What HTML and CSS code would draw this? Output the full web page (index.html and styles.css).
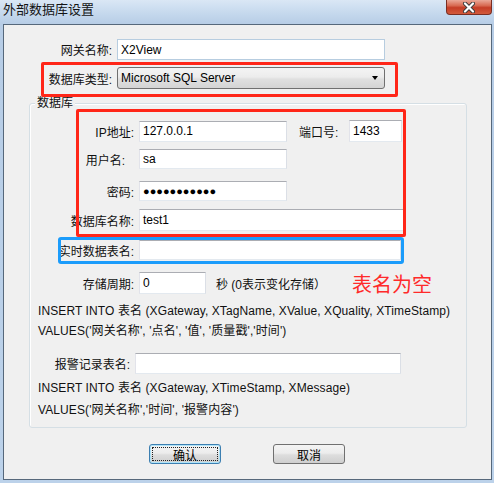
FILE: index.html
```html
<!DOCTYPE html>
<html lang="zh">
<head>
<meta charset="utf-8">
<title>外部数据库设置</title>
<link rel="stylesheet" href="styles.css">
</head>
<body>
<div class="window">
  <div class="titlebar">
    <span class="title">外部数据库设置</span>
    <div class="close">
      <svg width="14" height="11" viewBox="0 0 14 11"><path d="M3 1.5 L11 9.5 M11 1.5 L3 9.5" stroke="#3b3b3b" stroke-width="4" stroke-linecap="round"/><path d="M3 1.5 L11 9.5 M11 1.5 L3 9.5" stroke="#ffffff" stroke-width="2.2" stroke-linecap="round"/></svg>
    </div>
  </div>
  <div class="client">
    <div class="row row-name">
      <span class="lbl lbl-top">网关名称:</span>
      <div class="field f-top">X2View</div>
    </div>
    <div class="row row-type">
      <span class="lbl lbl-top">数据库类型:</span>
      <div class="select">Microsoft SQL Server<span class="arrow"></span></div>
    </div>

    <div class="group">
      <span class="legend">数据库</span>
      <div class="row row-ip">
        <span class="lbl lbl-g">IP地址:</span>
        <div class="field f-short h21">127.0.0.1</div>
        <span class="port-lbl">端口号:</span>
        <div class="field f-port">1433</div>
      </div>
      <div class="row row-user">
        <span class="lbl lbl-g lbl-user">用户名:</span>
        <div class="field f-short h20">sa</div>
      </div>
      <div class="row row-pwd">
        <span class="lbl lbl-g">密码:</span>
        <div class="field f-short h20 pwd">●●●●●●●●●●●</div>
      </div>
      <div class="row row-db">
        <span class="lbl lbl-g">数据库名称:</span>
        <div class="field f-long h22">test1</div>
      </div>
      <div class="row row-rt">
        <span class="lbl lbl-g">实时数据表名:</span>
        <div class="field f-rt h20"></div>
      </div>
      <div class="row row-period">
        <span class="lbl lbl-g">存储周期:</span>
        <div class="field f-period">0</div>
        <span class="note">秒 (0表示变化存储）</span>
        <span class="warn">表名为空</span>
      </div>
      <p class="sql sql-a">INSERT INTO 表名 (XGateway, XTagName, XValue, XQuality, XTimeStamp)</p>
      <p class="sql sql-b">VALUES('网关名称', '点名', '值', '质量戳','时间')</p>
      <div class="row row-alarm">
        <span class="lbl lbl-alarm">报警记录表名:</span>
        <div class="field f-alarm">&nbsp;</div>
      </div>
      <p class="sql sql-c">INSERT INTO 表名 (XGateway, XTimeStamp, XMessage)</p>
      <p class="sql sql-d">VALUES('网关名称','时间', '报警内容')</p>
    </div>

    <div class="buttons">
      <button class="btn btn-default"><span class="focus">确认</span></button>
      <button class="btn">取消</button>
    </div>

    <div class="mark mark-type"></div>
    <div class="mark mark-conn"></div>
    <div class="mark mark-rt"></div>
  </div>
</div>
</body>
</html>
```
FILE: styles.css
```css
html, body {
  margin: 0;
  padding: 0;
}
body {
  font-family: "Liberation Sans", "Noto Sans CJK SC", sans-serif;
  font-size: 12px;
  color: #111;
  background: #b9d0e9;
}
.window {
  width: 494px;
  height: 483px;
  display: flex;
  flex-direction: column;
  background: linear-gradient(180deg, #dae7f5 0px, #c7daee 12px, #b7cde6 24px, #bcd2ea 100%);
  overflow: hidden;
}
.titlebar {
  height: 24px;
  display: flex;
  align-items: flex-start;
  flex: none;
}
.title {
  margin: 2px 0 0 3px;
  font-size: 13px;
  line-height: 16px;
  color: #141414;
}
.close {
  margin-left: auto;
  margin-right: 2px;
  width: 46px;
  height: 15px;
  box-sizing: border-box;
  border: 1px solid #7a2e22;
  border-top: none;
  border-radius: 0 0 4px 4px;
  background: linear-gradient(180deg, #eaa898 0%, #d86a52 40%, #c53d26 55%, #d25a3c 100%);
  display: flex;
  justify-content: center;
  align-items: center;
}
.client {
  position: relative;
  flex: 1;
  margin: 0 2px 3px 3px;
  background: #f0f0f0;
  border: 1px solid #56687b;
}
.row {
  display: flex;
  align-items: center;
}
.lbl {
  text-align: right;
  flex: none;
  white-space: nowrap;
}
.field {
  box-sizing: border-box;
  background: #fff;
  border: 1px solid #e3e9ef;
  border-top-color: #abadb3;
  border-left-color: #e2e3ea;
  border-right-color: #dbdfe6;
  padding-left: 3px;
  display: flex;
  align-items: center;
  flex: none;
  color: #000;
  white-space: nowrap;
}

/* top rows */
.row-name { margin-top: 14px; height: 21px; }
.row-type { margin-top: 7px; height: 22px; }
.lbl-top { width: 108px; margin-right: 5px; }
.f-top { width: 268px; height: 21px; border-color: #b7cde0; }
.select {
  position: relative;
  box-sizing: border-box;
  width: 268px;
  height: 22px;
  border: 1px solid #707070;
  border-radius: 3px;
  background: linear-gradient(180deg, #f4f4f4 0%, #ececec 45%, #e0e0e0 55%, #d4d4d4 100%);
  padding-left: 3px;
  display: flex;
  align-items: center;
  color: #000;
}
.arrow {
  margin-left: auto;
  margin-right: 6px;
  width: 0;
  height: 0;
  border-left: 3.5px solid transparent;
  border-right: 3.5px solid transparent;
  border-top: 4px solid #000;
}

/* group */
.group {
  box-sizing: border-box;
  margin: 14px 0 0 25px;
  width: 438px;
  height: 325px;
  border: 1px solid #d5dfe5;
  border-radius: 3px;
  box-shadow: inset 1px 1px 0 #fff;
}
.legend {
  display: block;
  width: max-content;
  height: 14px;
  line-height: 14px;
  margin: -8px 0 -6px 5px;
  padding: 0 2px;
  background: #f0f0f0;
  color: #111;
}
.lbl-g { width: 104px; margin-right: 5px; }
.lbl-user { box-sizing: border-box; padding-right: 9px; }
.h20 { height: 20px; }
.h21 { height: 21px; }
.h22 { height: 22px; }
.row-ip { margin-top: 16px; height: 22px; }
.row-user { margin-top: 7px; height: 20px; }
.row-pwd { margin-top: 12px; height: 20px; }
.row-db { margin-top: 8px; height: 22px; }
.row-rt { margin-top: 9px; height: 20px; }
.row-period { margin-top: 12px; height: 22px; }
.f-short { width: 148px; }
.port-lbl { margin-left: 12px; width: 50px; }
.f-port { width: 53px; height: 22px; }
.f-long { width: 265px; }
.f-rt { width: 262px; }
.pwd { font-size: 11px; letter-spacing: 0; }
.f-period { width: 67px; height: 22px; }
.note { margin-left: 10px; }
.warn {
  margin-left: 26px;
  font-size: 20px;
  color: #ff2a2a;
  font-family: "Noto Sans CJK SC", sans-serif;
}
.sql {
  margin: 0;
  padding-left: 8px;
  white-space: nowrap;
  letter-spacing: 0.1px;
}
.sql-a { margin-top: 7px; line-height: 20px; }
.sql-b { line-height: 20px; }
.row-alarm { margin-top: 12px; height: 21px; }
.lbl-alarm { width: 100px; margin-right: 5px; }
.f-alarm { width: 266px; height: 21px; }
.sql-c { margin-top: 3px; line-height: 22px; }
.sql-d { line-height: 22px; }

/* buttons */
.buttons {
  display: flex;
  gap: 52px;
  margin-top: 16px;
  padding-left: 145px;
}
.btn {
  box-sizing: border-box;
  width: 72px;
  height: 20px;
  padding: 0;
  border: 1px solid #707070;
  border-radius: 3px;
  background: linear-gradient(180deg, #f4f4f4 0%, #ececec 45%, #dddddd 55%, #cfcfcf 100%);
  font: inherit;
  color: #000;
  display: flex;
  align-items: center;
  justify-content: center;
}
.btn-default {
  border-color: #3c7fb1;
  box-shadow: inset 0 0 0 1px #aee3f8;
  padding: 2px;
}
.focus {
  flex: 1;
  align-self: stretch;
  display: flex;
  align-items: center;
  justify-content: center;
  border: 1px dotted #222;
}

/* annotation overlays */
.mark {
  position: absolute;
  box-sizing: border-box;
  border: 3px solid #ff2618;
  border-radius: 2px;
  pointer-events: none;
}
.mark-type { left: 37px; top: 37px; width: 357px; height: 35px; }
.mark-conn { left: 72px; top: 84px; width: 330px; height: 128px; }
.mark-rt { left: 54px; top: 212px; width: 346px; height: 27px; border-color: #1b9cfb; border-radius: 3px; }
```
